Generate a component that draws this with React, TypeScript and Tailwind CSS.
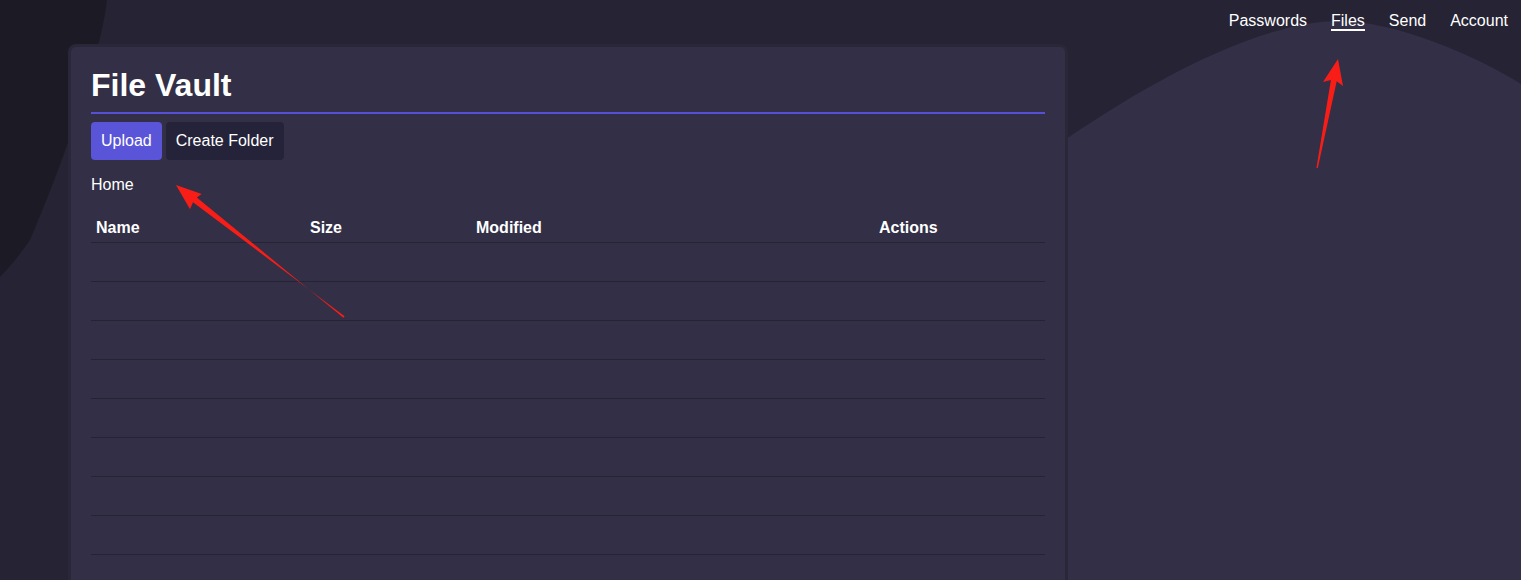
import React from 'react';

const navLinks = ['Passwords', 'Files', 'Send', 'Account'];
const rows = Array.from({ length: 10 });

function Backdrop() {
  return (
    <svg className="absolute inset-0 h-full w-full" viewBox="0 0 1521 580" preserveAspectRatio="none">
      <path d="M0 0 L107 0 C100 60, 60 170, 30 240 Q15 262 0 277 Z" fill="#1c1b25" />
      <path
        d="M1060 143 C1130 95, 1250 21, 1340 21 C1400 21, 1490 62, 1530 90 L1530 590 L1060 590 Z"
        fill="#322f46"
      />
    </svg>
  );
}

function Arrows() {
  return (
    <svg className="pointer-events-none absolute inset-0 z-20 h-full w-full" viewBox="0 0 1521 580">
      {/* arrow pointing at breadcrumb */}
      <polygon
        points="344.6,316.3 343.4,317.7 196.8,197.4 201.7,194 176,185 190,209.3 193,202.2"
        fill="#f81e17"
      />
      {/* arrow pointing at nav link */}
      <polygon
        points="1317.8,168 1316.4,168 1330.9,80 1323,82 1338,59 1343,86 1336.7,81.2"
        fill="#f81e17"
      />
    </svg>
  );
}

export default function App() {
  return (
    <div className="relative h-[580px] overflow-hidden bg-[#252334] font-['Liberation_Sans',Arial,sans-serif] text-white">
      <Backdrop />

      <div className="relative z-10">
        {/* Top navigation */}
        <nav className="flex h-[44px] items-start justify-end gap-6 pr-[13px] pt-[12px] text-base leading-[17px]">
          {navLinks.map((link) => (
            <a
              key={link}
              href="#"
              className={link === 'Files' ? 'border-b-2 border-white' : 'border-b-2 border-transparent'}
            >
              {link}
            </a>
          ))}
        </nav>

        {/* Vault card */}
        <div className="ml-[68px] w-[1000px] rounded-lg border-[3px] border-[#292738] bg-[#322f46] px-[20px] pt-[20px] pb-10">
          <h1 className="border-b-2 border-[#5650d6] pb-[8px] text-[32px] font-bold leading-[37px]">
            File Vault
          </h1>

          <div className="mt-[8px] flex gap-[4px]">
            <button className="rounded bg-[#5a54d8] px-[10px] py-[10px] text-base leading-[18px]">
              Upload
            </button>
            <button className="rounded bg-[#25233a] px-[10px] py-[10px] text-base leading-[18px]">
              Create Folder
            </button>
          </div>

          <div className="mt-[16px] text-base leading-[18px]">Home</div>

          {/* File table */}
          <div className="mt-[20px]">
            <div className="grid grid-cols-[214px_166px_403px_171px] border-b border-[#252334] text-base font-bold leading-[18px]">
              <div className="p-[5px]">Name</div>
              <div className="p-[5px]">Size</div>
              <div className="p-[5px]">Modified</div>
              <div className="p-[5px]">Actions</div>
            </div>
            {rows.map((_, i) => (
              <div
                key={i}
                className="grid h-[39px] grid-cols-[214px_166px_403px_171px] border-b border-[#252334]"
              >
                <div />
                <div />
                <div />
                <div />
              </div>
            ))}
          </div>
        </div>
      </div>

      <Arrows />
    </div>
  );
}
